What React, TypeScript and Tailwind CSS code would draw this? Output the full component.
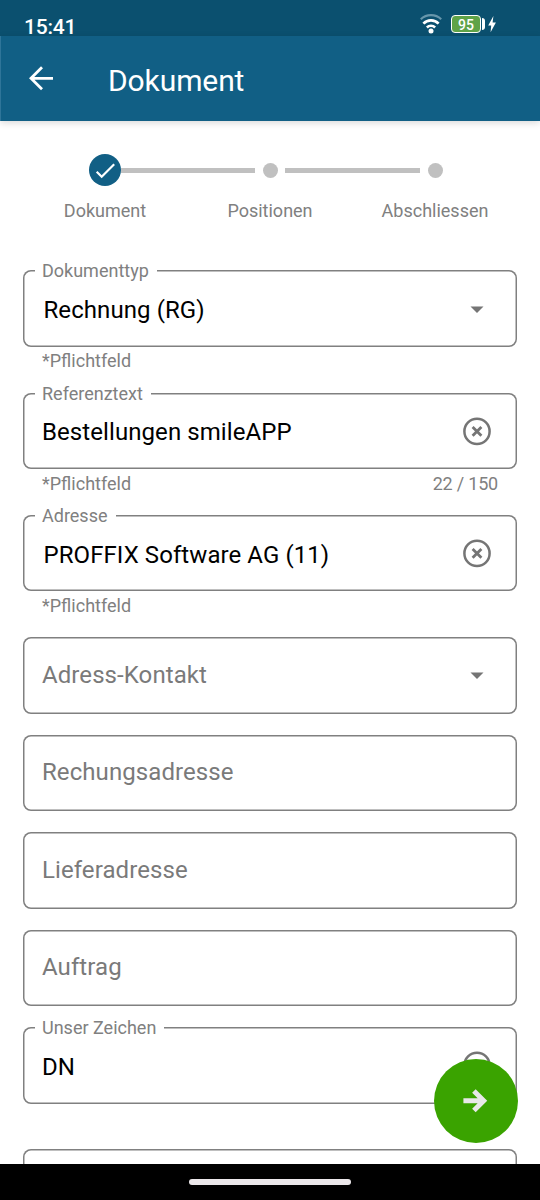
import { clsx } from "clsx";

interface FieldProps {
  label: string;
  value?: string;
  helper?: string;
  counter?: string;
  icon?: "dropdown" | "clear";
  inset?: boolean;
  tall?: boolean;
}

const STEPS = ["Dokument", "Positionen", "Abschliessen"];

const FIELDS: FieldProps[] = [
  { label: "Dokumenttyp", value: "Rechnung (RG)", helper: "*Pflichtfeld", icon: "dropdown", inset: true, tall: true },
  { label: "Referenztext", value: "Bestellungen smileAPP", helper: "*Pflichtfeld", counter: "22 / 150", icon: "clear", tall: true },
  { label: "Adresse", value: "PROFFIX Software AG (11)", helper: "*Pflichtfeld", icon: "clear", inset: true, tall: true },
  { label: "Adress-Kontakt", icon: "dropdown" },
  { label: "Rechungsadresse" },
  { label: "Lieferadresse" },
  { label: "Auftrag" },
  { label: "Unser Zeichen", value: "DN", icon: "clear", tall: true },
  { label: "" },
];

function ClearIcon() {
  return (
    <svg className="h-7 w-7 overflow-visible" viewBox="0 0 28 28" fill="none" stroke="#757575">
      <circle cx="14" cy="14.4" r="12.6" strokeWidth="2.5" />
      <path d="M9.6 10l8.8 8.8M18.4 10l-8.8 8.8" strokeWidth="2.8" />
    </svg>
  );
}

function DropdownIcon() {
  return (
    <svg className="h-7 w-7" viewBox="0 0 28 28" fill="#757575">
      <path d="M7.5 11.4h13L14 18.1z" />
    </svg>
  );
}

function Field({ label, value, helper, counter, icon, inset, tall }: FieldProps) {
  return (
    <div className={clsx("shrink-0", tall ? "h-[122.3px]" : "h-[97.5px]")}>
      <div className="relative flex h-[76.6px] items-center justify-between rounded-[8px] pr-[26px] pl-[19px] shadow-[inset_0_0_0_1.5px_#808080]">
        {value && (
          <span className="absolute -top-[10px] left-[12px] bg-white pr-[8px] pl-[7px] text-[18px] leading-[22px] text-[#808080]">
            {label}
          </span>
        )}
        <span
          className={clsx(
            "text-[24px] leading-8 tracking-[0.08px]",
            value ? "pt-[3px] text-black" : "pb-[1px] text-[#7a7a7a]",
            inset && "pl-[1.5px]"
          )}
        >
          {value || label}
        </span>
        {icon === "dropdown" && <DropdownIcon />}
        {icon === "clear" && <ClearIcon />}
      </div>
      {helper && (
        <div className="flex justify-between pt-[2.5px] pr-[19px] pl-[19px] text-[18px] leading-[23px] text-[#808080]">
          <span>{helper}</span>
          <span className="tracking-[-0.2px]">{counter}</span>
        </div>
      )}
    </div>
  );
}

function StatusBar() {
  return (
    <div className="flex h-9 shrink-0 items-start justify-between bg-[#0b506f] pr-[44px] pl-[24px]">
      <span className="pt-[14px] text-[21px] leading-[26px] font-medium tracking-[-0.2px] text-white">15:41</span>
      <div className="flex items-center pt-[14px]">
        <svg className="h-5 w-[22px]" viewBox="0 0 22 20" fill="none" stroke="#fff" strokeWidth="2.3">
          <path d="M0.8 5.3a14.8 14.8 0 0 1 20.4 0" stroke="#6796ab" strokeWidth="2.2" />
          <path d="M3.4 9.6a10.6 10.6 0 0 1 15.2 0" strokeWidth="2.7" />
          <path d="M6.9 13.5a5.8 5.8 0 0 1 8.2 0" strokeWidth="2.6" />
          <circle cx="11" cy="17" r="2.5" fill="#fff" stroke="none" />
        </svg>
        <div className="ml-[9px] flex h-[18px] w-[30px] items-center justify-center rounded-[4px] border border-white bg-[#5fa348] pt-[2px] text-[14px] leading-4 font-medium text-white">
          95
        </div>
        <div className="ml-px h-[12px] w-[2.5px] rounded-r-sm bg-white" />
        <svg className="ml-[3.5px] h-[18px] w-2" viewBox="0 0 8 18" fill="#fff">
          <path d="M5.4 1L0.2 10.4h3L2.6 17.2 7.9 7.4H4.6z" />
        </svg>
      </div>
    </div>
  );
}

function Stepper() {
  return (
    <div className="grid grid-cols-3 px-[22.5px] pt-[33px]">
      {STEPS.map((step, i) => (
        <div key={step} className="flex flex-col items-center">
          <div className="flex h-8 w-full items-center">
            <div className={clsx("h-[5px] flex-1", i > 0 ? "bg-[#c0c0c0]" : "bg-white")} />
            {i === 0 ? (
              <div className="flex h-8 w-8 items-center justify-center rounded-full bg-[#115f85]">
                <svg className="h-8 w-8" viewBox="0 0 32 32" fill="none" stroke="#fff" strokeWidth="2.2">
                  <path d="M7.7 17.8l5 5L25.2 10.2" />
                </svg>
              </div>
            ) : (
              <div className="mx-[7.5px] h-[15px] w-[15px] rounded-full bg-[#c0c0c0]" />
            )}
            <div className={clsx("h-[5px] flex-1", i < 2 ? "bg-[#c0c0c0]" : "bg-white")} />
          </div>
          <span className="pt-[13px] text-[18px] leading-6 text-[#808080]">{step}</span>
        </div>
      ))}
    </div>
  );
}

export default function App() {
  return (
    <div className="relative flex h-[1200px] w-[540px] flex-col overflow-hidden bg-white font-['Roboto',sans-serif]">
      <StatusBar />

      {/* App bar */}
      <header className="flex h-[85px] shrink-0 items-center border-l border-[#2f7599] bg-[#115f85] pl-[27px] text-white shadow-[0_2px_7px_rgba(0,0,0,0.15)]">
        <button aria-label="Zurück" className="pb-px">
          <svg className="h-[26px] w-[26px]" viewBox="0 0 26 26" fill="none" stroke="#fff" strokeWidth="2.8">
            <path d="M25 13.3H3.5M14 2.3L3 13.3l11 11" />
          </svg>
        </button>
        <h1 className="pt-[4px] pl-[54px] text-[30px] leading-9 tracking-[-0.1px]">Dokument</h1>
      </header>

      {/* Form */}
      <main className="flex min-h-0 flex-1 flex-col overflow-hidden">
        <Stepper />
        <div className="flex flex-col px-[23px] pt-[47.3px]">
          {FIELDS.map((field, i) => (
            <Field key={i} {...field} />
          ))}
        </div>
      </main>

      <button
        aria-label="Weiter"
        className="absolute top-[1059px] left-[433.6px] flex h-[84px] w-[84px] items-center justify-center rounded-full bg-[#3aa300]"
      >
        <svg className="h-6 w-6 overflow-visible" viewBox="0 0 24 24" fill="none" stroke="#e8e8e8" strokeWidth="5">
          <path d="M-0.6 11.7h20M9.9 1.9l9.8 9.8-9.8 9.8" />
        </svg>
      </button>

      {/* Gesture bar */}
      <div className="flex h-9 shrink-0 items-center justify-center bg-black">
        <div className="h-[6px] w-[162px] rounded-full bg-[#ebe7ea]" />
      </div>
    </div>
  );
}
